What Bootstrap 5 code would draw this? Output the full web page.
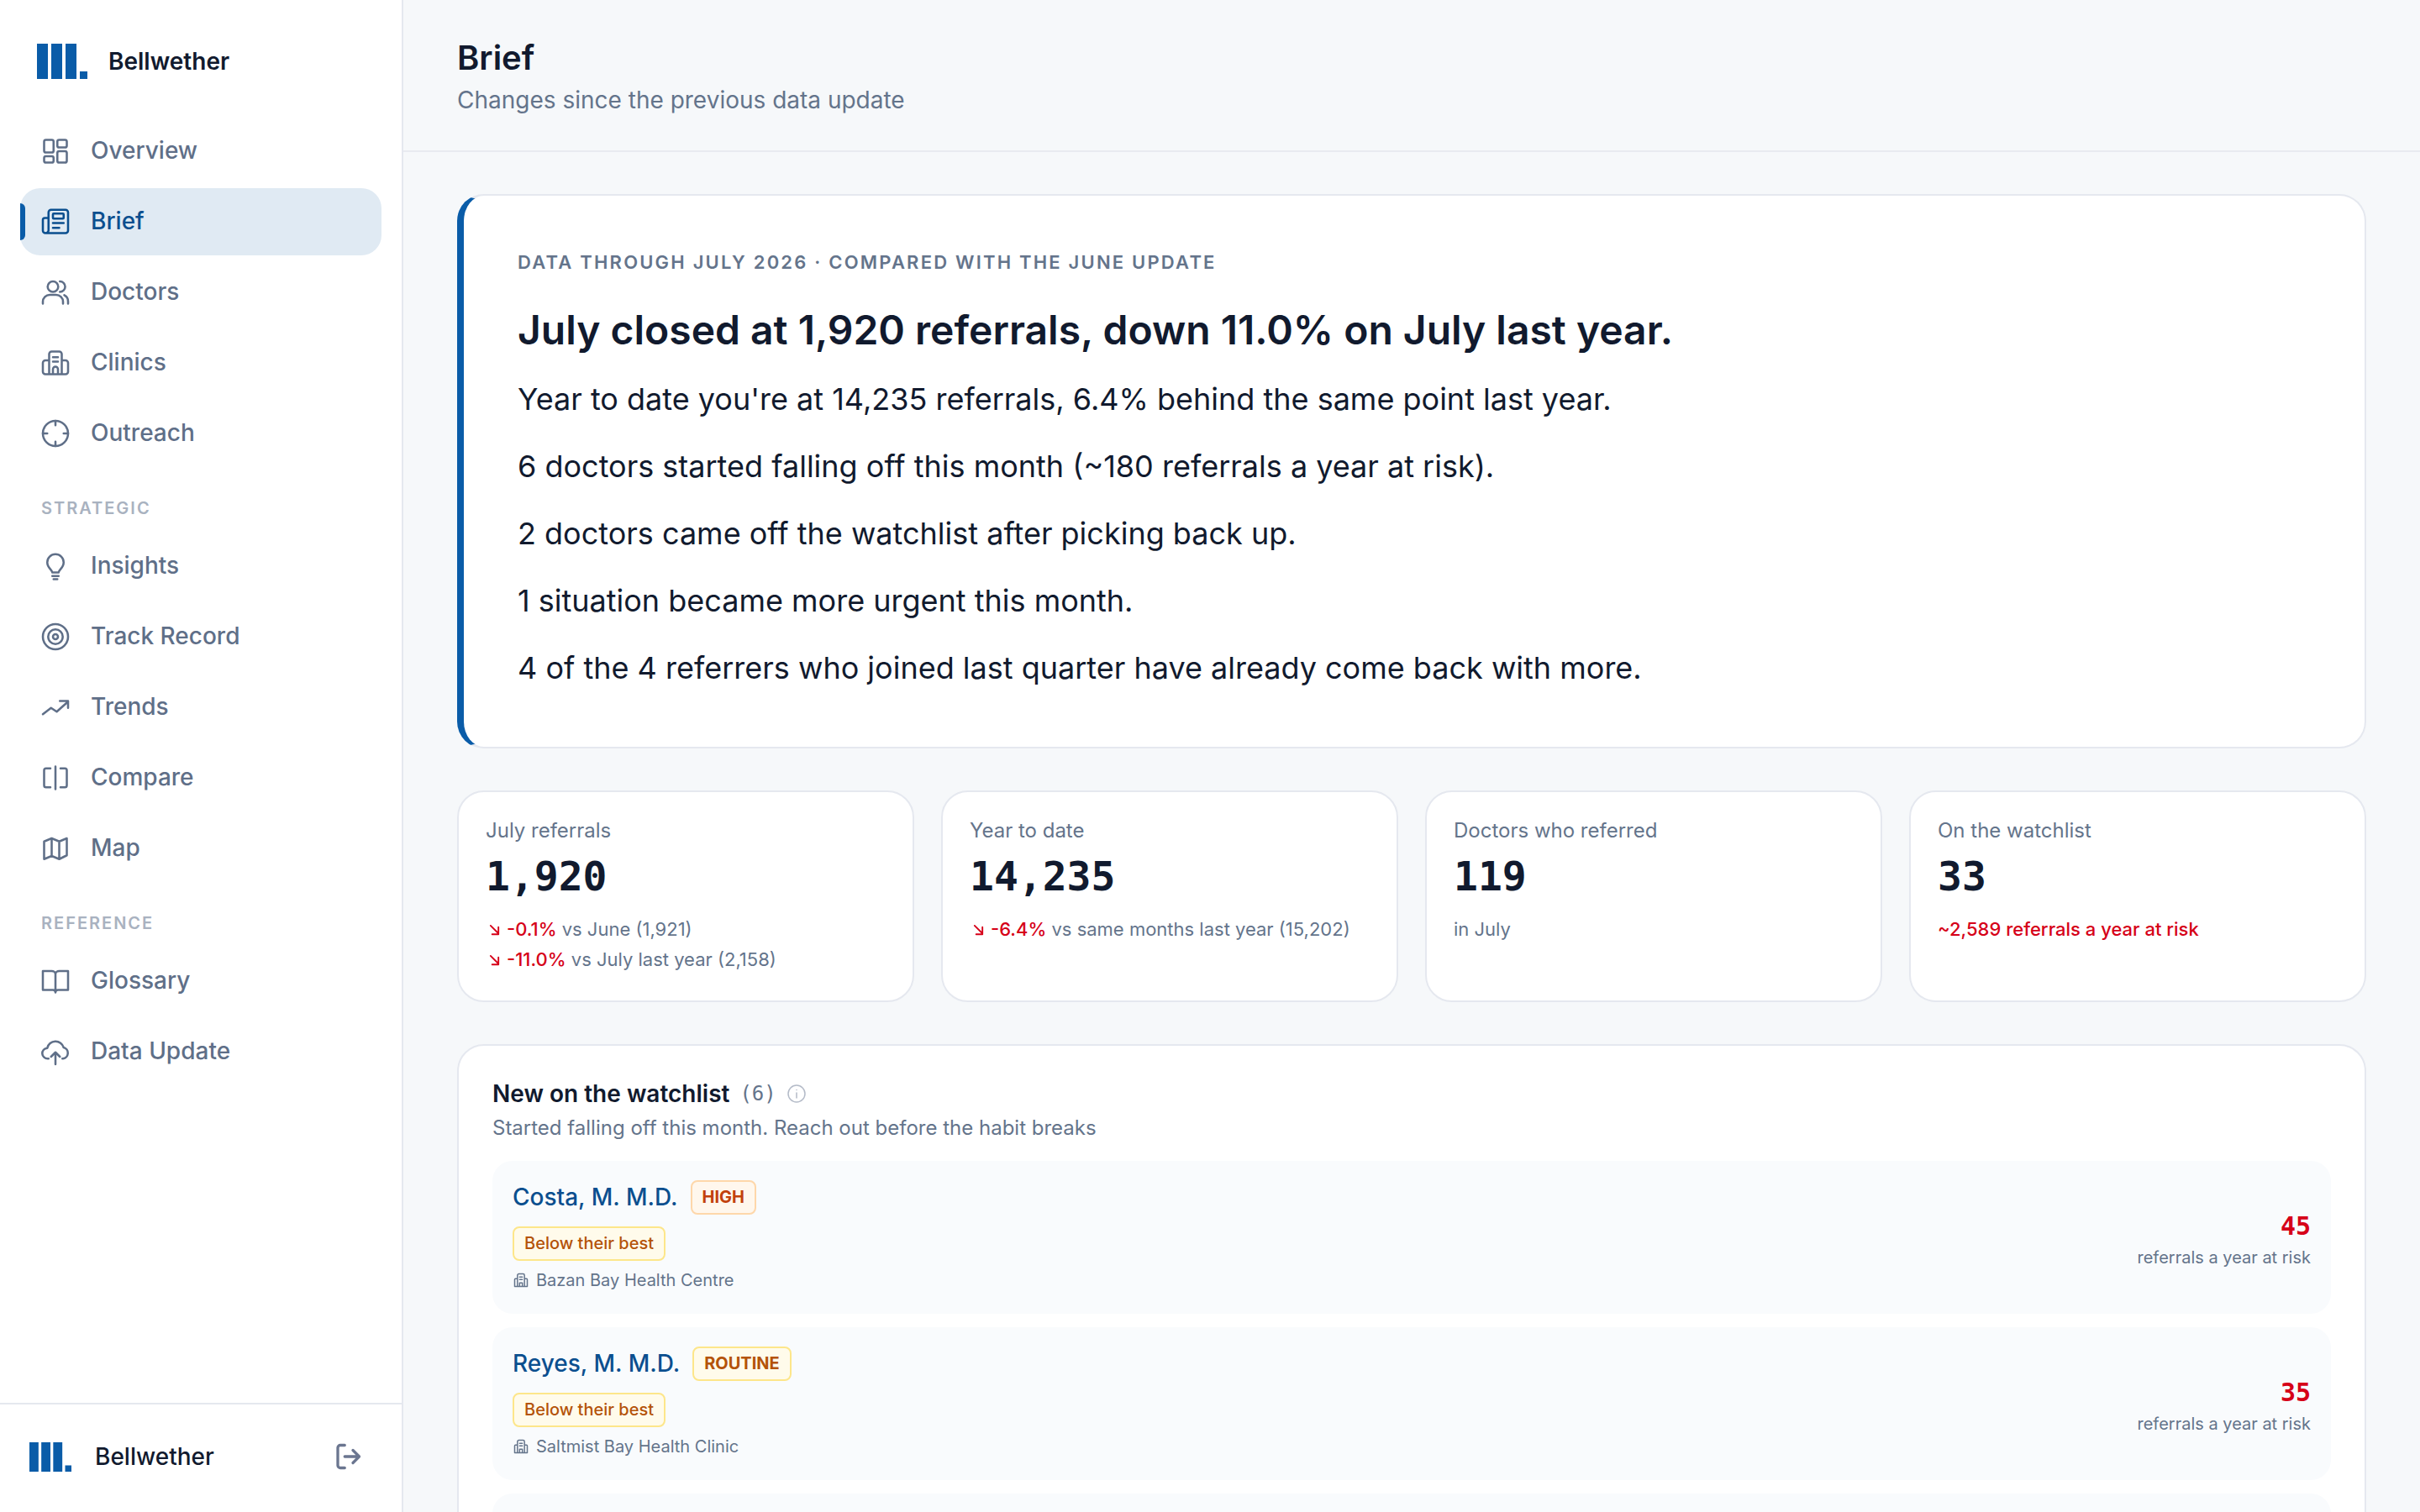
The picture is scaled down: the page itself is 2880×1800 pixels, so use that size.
<!DOCTYPE html>
<html lang="en">
<head>
<meta charset="UTF-8">
<meta name="viewport" content="width=device-width, initial-scale=1.0">
<title>Bellwether - Brief</title>
<link href="https://cdn.jsdelivr.net/npm/bootstrap@5.3.0/dist/css/bootstrap.min.css" rel="stylesheet">
<style>
    body { font-family: "Inter", "Liberation Sans", sans-serif; background: #f6f8fa; color: #111a2e; font-size: 28px; }
    .mono { font-family: "DejaVu Sans Mono", "Liberation Mono", monospace; }
    .ico { width: 36px; height: 36px; flex: none; fill: none; stroke: currentColor; stroke-width: 1.7; stroke-linecap: round; stroke-linejoin: round; }

    /* sidebar */
    .side { width: 480px; flex: none; background: #fff; border-right: 2px solid #e5e8ef; }
    .brand { height: 140px; padding: 6px 0 0 44px; gap: 25px; font-weight: 600; font-size: 28px; }
    .side-nav { padding: 0 24px; gap: 4px; }
    .side-link { height: 80px; padding-left: 24px; gap: 24px; border-radius: 24px; color: #5f6f88; font-weight: 500; font-size: 28px; text-decoration: none; position: relative; }
    .side-link span { padding-bottom: 3px; }
    .side-link.on { background: #e0eaf3; color: #0b4f8f; }
    .side-link.on::before { content: ""; position: absolute; left: 0; top: 18px; bottom: 18px; width: 6px; background: #0a5ca8; border-radius: 0 6px 6px 0; }
    .side-head { height: 70px; padding: 20px 0 0 25px; font-size: 20px; font-weight: 600; letter-spacing: .1em; color: #a9b2c0; display: flex; align-items: center; }
    .side-foot { height: 130px; border-top: 2px solid #e5e8ef; padding: 0 46px 4px 35px; font-weight: 500; font-size: 28px; gap: 28px; }
    .side-foot .ico { color: #6b7690; stroke-width: 2.2; }

    /* main */
    .top { height: 181px; border-bottom: 2px solid #e9ebf0; padding: 0 64px; flex: none; }
    .top h1 { font-size: 40px; font-weight: 600; margin: 0 0 2px; line-height: 56px; }
    .top p { font-size: 28px; color: #64748b; margin: 0; line-height: 40px; }
    .body-wrap { padding: 50px 64px 0; }

    .hero { border: 2px solid #e5e8ef; border-left: 8px solid #0a5ca8; border-radius: 32px; background: #fff; height: 660px; padding: 62px 64px 0; }
    .hero-kick { font-size: 22px; font-weight: 600; letter-spacing: .1em; color: #64748b; line-height: 34px; margin-bottom: 30px; }
    .hero-head { font-size: 48px; font-weight: 600; line-height: 68px; margin-bottom: 8px; }
    .hero-line { font-size: 36px; line-height: 80px; margin: 0; }

    .kpi-row { --bs-gutter-x: 32px; margin-top: 50px; }
    .kpi { border: 2px solid #e5e8ef; border-radius: 32px; background: #fff; height: 252px; padding: 26px 32px 0; }
    .kpi-label { font-size: 24px; color: #64748b; line-height: 40px; }
    .kpi-num { font-size: 48px; font-weight: 700; line-height: 68px; margin-bottom: 11px; }
    .kpi-delta { font-size: 22px; line-height: 36px; color: #64748b; }
    .down { color: #d60018; font-weight: 500; }
    .arrow { width: 15px; height: 15px; fill: none; stroke: #d60018; stroke-width: 2; stroke-linecap: round; stroke-linejoin: round; margin: 0 7px 0 3px; vertical-align: -1px; }

    .watch { border: 2px solid #e5e8ef; border-radius: 32px; background: #fff; margin-top: 50px; padding: 35px 40px 0; }
    .watch-title { font-size: 28px; font-weight: 600; line-height: 44px; gap: 12px; }
    .watch-count { font-size: 24px; font-weight: 400; color: #64748b; }
    .watch-info { width: 24px; height: 24px; color: #b4bbc8; stroke-width: 1.5; }
    .watch-sub { font-size: 24px; color: #64748b; line-height: 38px; margin-bottom: 20px; }
    .risk-row { background: #f9fbfd; border-radius: 24px; height: 182px; padding: 24px; margin-bottom: 16px; }
    .doc-line { margin-bottom: 10px; margin-top: -2px; }
    .doc-name { font-size: 28px; font-weight: 500; color: #0b4f8f; line-height: 40px; margin-right: 15px; }
    .tag-pill { display: inline-block; font-size: 20px; line-height: 37px; padding: 0 12px; border-radius: 8px; border: 2px solid #fde68a; background: #fffbeb; color: #b45309; font-weight: 500; }
    .tag-pill.strong { font-weight: 700; }
    .tag-pill.high { border-color: #fed7aa; background: #fff7ed; color: #c2410c; }
    .clinic { font-size: 20px; color: #64748b; line-height: 32px; margin-top: 7px; gap: 8px; }
    .clinic .ico { width: 20px; height: 20px; stroke-width: 1.8; }
    .risk-num { font-size: 30px; font-weight: 700; color: #d60018; line-height: 40px; }
    .risk-note { font-size: 20px; color: #64748b; line-height: 34px; }
</style>
</head>
<body>
<div class="d-flex vh-100 overflow-hidden">
    <aside class="side d-flex flex-column">
        <div class="brand d-flex align-items-center">
            <svg width="60" height="42" viewBox="0 0 60 42" fill="#0a5ca8"><rect width="13" height="42"/><rect x="17" width="13" height="42"/><rect x="34" width="13" height="42"/><rect x="51" y="33" width="9" height="9"/></svg>
            <span>Bellwether</span>
        </div>
        <nav class="side-nav d-flex flex-column">
            <a class="side-link d-flex align-items-center" href="#"><svg class="ico" viewBox="0 0 24 24"><rect x="3" y="3" width="7.500" height="10" rx="1.400"/><rect x="13.500" y="3" width="7.500" height="6" rx="1.400"/><rect x="3" y="16" width="7.500" height="5" rx="1.400"/><rect x="13.500" y="12" width="7.500" height="9" rx="1.400"/></svg><span>Overview</span></a>
            <a class="side-link on d-flex align-items-center" href="#"><svg class="ico" viewBox="0 0 24 24"><path d="M6.500 19V4.500a2 2 0 0 1 2-2H20a2 2 0 0 1 2 2V19a2 2 0 0 1-2 2H4A2 2 0 0 1 2 19v-8.500A1.500 1.500 0 0 1 3.500 9h3M4 21a2.500 2.500 0 0 0 2.500-2"/><rect x="10" y="5.500" width="8.500" height="4" rx=".6"/><path d="M10 13h8.500M10 16.800h5"/></svg><span>Brief</span></a>
            <a class="side-link d-flex align-items-center" href="#"><svg class="ico" viewBox="0 0 24 24"><circle cx="10" cy="7.500" r="4.200"/><path d="M2 21v-1.500a5.500 5.500 0 0 1 5.500-5.500h5a5.500 5.500 0 0 1 5.500 5.500V21M15.500 3.300a4.200 4.200 0 0 1 0 8.400M19 14.300a5.500 5.500 0 0 1 3 5V21"/></svg><span>Doctors</span></a>
            <a class="side-link d-flex align-items-center" href="#"><svg class="ico" viewBox="0 0 24 24"><path d="M7 21V5a2 2 0 0 1 2-2h6a2 2 0 0 1 2 2v16M7 10H4a2 2 0 0 0-2 2v7a2 2 0 0 0 2 2h16a2 2 0 0 0 2-2v-7a2 2 0 0 0-2-2h-3M4 21h16M10 7.500h4M10 11h4M10 21v-4a2 2 0 0 1 4 0v4"/></svg><span>Clinics</span></a>
            <a class="side-link d-flex align-items-center" href="#"><svg class="ico" viewBox="0 0 24 24"><circle cx="12" cy="12" r="10"/><path d="M12 2v3.500M12 18.500V22M2 12h3.500M18.500 12H22"/></svg><span>Outreach</span></a>
            <div class="side-head">STRATEGIC</div>
            <a class="side-link d-flex align-items-center" href="#"><svg class="ico" viewBox="0 0 24 24"><path d="M9.500 17c0-2-4-3.500-4-8a6.500 6.500 0 0 1 13 0c0 4.500-4 6-4 8zM9.500 19.800h5M10.500 22.300h3"/></svg><span>Insights</span></a>
            <a class="side-link d-flex align-items-center" href="#"><svg class="ico" viewBox="0 0 24 24"><circle cx="12" cy="12" r="10"/><circle cx="12" cy="12" r="5.800"/><circle cx="12" cy="12" r="2"/></svg><span>Track Record</span></a>
            <a class="side-link d-flex align-items-center" href="#"><svg class="ico" viewBox="0 0 24 24"><path d="M2 17.500l6.500-5 4.500 3 9-8M15.500 7H22v5.500"/></svg><span>Trends</span></a>
            <a class="side-link d-flex align-items-center" href="#"><svg class="ico" viewBox="0 0 24 24"><path d="M8 4.500H4.500A1.500 1.500 0 0 0 3 6v12a1.500 1.500 0 0 0 1.500 1.500H8M16 4.500h3.500A1.500 1.500 0 0 1 21 6v12a1.500 1.500 0 0 1-1.500 1.500H16M12 3v18"/></svg><span>Compare</span></a>
            <a class="side-link d-flex align-items-center" href="#"><svg class="ico" viewBox="0 0 24 24"><path d="M3 6.500l6-2.500 6 2.500 6-2.500v13.500l-6 3-6-2.500-6 2.500zM9 4v14.500M15 6.500V20"/></svg><span>Map</span></a>
            <div class="side-head">REFERENCE</div>
            <a class="side-link d-flex align-items-center" href="#"><svg class="ico" viewBox="0 0 24 24"><path d="M12 6.500C12 5 10.500 4 9 4H2v15h8c1 0 2 .8 2 2 0-1.200 1-2 2-2h8V4h-7c-1.500 0-3 1-3 2.500zM12 6.500V21"/></svg><span>Glossary</span></a>
            <a class="side-link d-flex align-items-center" href="#"><svg class="ico" viewBox="0 0 24 24"><path d="M6.500 17.500H6a4.200 4.200 0 0 1-.5-8.400 6.700 6.700 0 0 1 13-.4 4.500 4.500 0 0 1-.5 8.800h-.5M12 22v-9M8.500 16l3.500-3.500 3.500 3.500"/></svg><span>Data Update</span></a>
        </nav>
        <div class="side-foot mt-auto d-flex align-items-center">
            <svg width="50" height="35" viewBox="0 0 60 42" fill="#0a5ca8"><rect width="13" height="42"/><rect x="17" width="13" height="42"/><rect x="34" width="13" height="42"/><rect x="51" y="33" width="9" height="9"/></svg>
            <span>Bellwether</span>
            <svg class="ico ms-auto" viewBox="0 0 24 24"><path d="M9.500 3H6a2 2 0 0 0-2 2v14a2 2 0 0 0 2 2h3.500M9.500 12H21M16 7l5 5-5 5"/></svg>
        </div>
    </aside>

    <main class="flex-grow-1 d-flex flex-column overflow-hidden">
        <header class="top d-flex flex-column justify-content-center">
            <h1>Brief</h1>
            <p>Changes since the previous data update</p>
        </header>
        <div class="body-wrap">
            <section class="hero">
                <div class="hero-kick">DATA THROUGH JULY 2026 · COMPARED WITH THE JUNE UPDATE</div>
                <div class="hero-head">July closed at 1,920 referrals, down 11.0% on July last year.</div>
                <p class="hero-line">Year to date you're at 14,235 referrals, 6.4% behind the same point last year.</p>
                <p class="hero-line">6 doctors started falling off this month (~180 referrals a year at risk).</p>
                <p class="hero-line">2 doctors came off the watchlist after picking back up.</p>
                <p class="hero-line">1 situation became more urgent this month.</p>
                <p class="hero-line">4 of the 4 referrers who joined last quarter have already come back with more.</p>
            </section>

            <div class="row kpi-row">
                <div class="col-3"><div class="kpi">
                    <div class="kpi-label">July referrals</div>
                    <div class="kpi-num mono">1,920</div>
                    <div class="kpi-delta"><svg class="arrow" viewBox="0 0 16 16"><path d="M3 2l10 10M13 4v9H5"/></svg><span class="down">-0.1%</span> vs June (1,921)</div>
                    <div class="kpi-delta"><svg class="arrow" viewBox="0 0 16 16"><path d="M3 2l10 10M13 4v9H5"/></svg><span class="down">-11.0%</span> vs July last year (2,158)</div>
                </div></div>
                <div class="col-3"><div class="kpi">
                    <div class="kpi-label">Year to date</div>
                    <div class="kpi-num mono">14,235</div>
                    <div class="kpi-delta"><svg class="arrow" viewBox="0 0 16 16"><path d="M3 2l10 10M13 4v9H5"/></svg><span class="down">-6.4%</span> vs same months last year (15,202)</div>
                </div></div>
                <div class="col-3"><div class="kpi">
                    <div class="kpi-label">Doctors who referred</div>
                    <div class="kpi-num mono">119</div>
                    <div class="kpi-delta">in July</div>
                </div></div>
                <div class="col-3"><div class="kpi">
                    <div class="kpi-label">On the watchlist</div>
                    <div class="kpi-num mono">33</div>
                    <div class="kpi-delta"><span class="down">~2,589 referrals a year at risk</span></div>
                </div></div>
            </div>

            <section class="watch">
                <div class="watch-title d-flex align-items-center">
                    <span>New on the watchlist</span>
                    <span class="watch-count mono">(6)</span>
                    <svg class="ico watch-info" viewBox="0 0 24 24"><circle cx="12" cy="12" r="10"/><path d="M12 11v6M12 7.500v.01"/></svg>
                </div>
                <div class="watch-sub">Started falling off this month. Reach out before the habit breaks</div>

                <div class="risk-row d-flex justify-content-between align-items-center">
                    <div>
                        <div class="doc-line d-flex align-items-center"><span class="doc-name">Costa, M. M.D.</span><span class="tag-pill strong high">HIGH</span></div>
                        <span class="tag-pill">Below their best</span>
                        <div class="clinic d-flex align-items-center"><svg class="ico" viewBox="0 0 24 24"><path d="M7 21V5a2 2 0 0 1 2-2h6a2 2 0 0 1 2 2v16M7 10H4a1 1 0 0 0-1 1v10h18V11a1 1 0 0 0-1-1h-3M10 7.500h4M10 11h4M10 21v-5h4v5"/></svg>Bazan Bay Health Centre</div>
                    </div>
                    <div class="text-end pt-2">
                        <div class="risk-num mono">45</div>
                        <div class="risk-note">referrals a year at risk</div>
                    </div>
                </div>

                <div class="risk-row d-flex justify-content-between align-items-center">
                    <div>
                        <div class="doc-line d-flex align-items-center"><span class="doc-name">Reyes, M. M.D.</span><span class="tag-pill strong">ROUTINE</span></div>
                        <span class="tag-pill">Below their best</span>
                        <div class="clinic d-flex align-items-center"><svg class="ico" viewBox="0 0 24 24"><path d="M7 21V5a2 2 0 0 1 2-2h6a2 2 0 0 1 2 2v16M7 10H4a1 1 0 0 0-1 1v10h18V11a1 1 0 0 0-1-1h-3M10 7.500h4M10 11h4M10 21v-5h4v5"/></svg>Saltmist Bay Health Clinic</div>
                    </div>
                    <div class="text-end pt-2">
                        <div class="risk-num mono">35</div>
                        <div class="risk-note">referrals a year at risk</div>
                    </div>
                </div>

                <div class="risk-row"></div>
            </section>
        </div>
    </main>
</div>
<script src="https://cdn.jsdelivr.net/npm/bootstrap@5.3.0/dist/js/bootstrap.bundle.min.js"></script>
</body>
</html>
